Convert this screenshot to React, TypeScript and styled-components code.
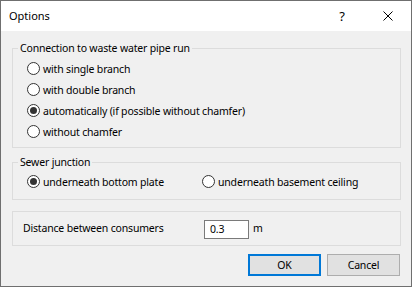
import React from 'react'
import styled, { createGlobalStyle } from 'styled-components'

const GlobalStyle = createGlobalStyle`
  html, body {
    margin: 0;
    padding: 0;
    background: #ffffff;
  }
  body {
    font-family: "Noto Sans", "Open Sans", sans-serif;
    font-size: 10.5px;
    letter-spacing: -0.18px;
    color: #000;
  }
`

const Window = styled.div`
  width: 412px;
  height: 287px;
  box-sizing: border-box;
  border: 1px solid #6f6f6f;
  display: flex;
  flex-direction: column;
  background: #f0f0f0;
`

const TitleBar = styled.div`
  height: 30px;
  background: #fff;
  display: flex;
  align-items: center;
`

const Title = styled.div`
  flex: 1;
  padding-left: 8px;
  font-size: 11px;
  letter-spacing: 0;
  line-height: 16px;
`

const CaptionButton = styled.div`
  width: 46px;
  height: 30px;
  display: flex;
  align-items: center;
  justify-content: center;
  font-size: 13px;
`

const Body = styled.div`
  flex: 1;
  padding: 9px 10px 10px 11px;
  display: flex;
  flex-direction: column;
`

const Group = styled.fieldset<{ $gap?: number }>`
  margin: ${({ $gap }) => $gap || 0}px 0 0 0;
  padding: 0;
  border: 1px solid #dcdcdc;
  min-width: 0;
`

const Legend = styled.legend`
  margin-left: 5px;
  padding: 0 2px;
  line-height: 16px;
`

const GroupContent = styled.div<{ $pt: number; $pb: number }>`
  padding: ${({ $pt }) => $pt}px 0 ${({ $pb }) => $pb}px 14px;
  display: flex;
  flex-direction: column;
`

const RadioRow = styled.div`
  display: flex;
  height: 21px;
  align-items: center;
`

const Option = styled.label<{ $width?: number }>`
  display: flex;
  align-items: center;
  gap: 3px;
  width: ${({ $width }) => ($width ? `${$width}px` : 'auto')};
  line-height: 16px;
  white-space: nowrap;
`

const RadioCircle = styled.span<{ $checked?: boolean }>`
  width: 13px;
  height: 13px;
  box-sizing: border-box;
  border: 1px solid #333;
  border-radius: 50%;
  background: #fff;
  display: flex;
  align-items: center;
  justify-content: center;
  flex: none;

  &::after {
    content: '';
    width: 7px;
    height: 7px;
    border-radius: 50%;
    background: #333;
    display: ${({ $checked }) => ($checked ? 'block' : 'none')};
  }
`

const Panel = styled.div`
  margin-top: 11px;
  border: 1px solid #dcdcdc;
  height: 35px;
  box-sizing: border-box;
  display: flex;
  align-items: center;
  padding: 1px 0 0 10px;
`

const FieldLabel = styled.span`
  width: 181px;
  line-height: 16px;
  padding-bottom: 3px;
`

const NumberBox = styled.div`
  width: 45px;
  height: 19px;
  box-sizing: border-box;
  border: 1px solid #7a7a7a;
  background: #fff;
  padding-left: 5px;
  line-height: 17px;
`

const Unit = styled.span`
  margin-left: 4px;
  line-height: 16px;
  padding-bottom: 3px;
`

const ButtonRow = styled.div`
  margin-top: 8px;
  display: flex;
  justify-content: flex-end;
  gap: 6px;
  padding-right: 1px;
`

const Button = styled.button<{ $default?: boolean }>`
  width: 73px;
  height: 22px;
  box-sizing: border-box;
  margin: 0;
  padding: 0;
  font-family: inherit;
  font-size: 10.5px;
  letter-spacing: inherit;
  color: #000;
  background: #e1e1e1;
  border: ${({ $default }) => ($default ? '2px solid #0078d7' : '1px solid #adadad')};
`

export default function App() {
  return (
    <>
      <GlobalStyle />
      <Window>
        <TitleBar>
          <Title>Options</Title>
          <CaptionButton>?</CaptionButton>
          <CaptionButton>
            <svg width="10" height="10" viewBox="0 0 10 10">
              <path d="M0.5 0.5 L9.5 9.5 M9.5 0.5 L0.5 9.5" stroke="#000" strokeWidth="1" fill="none" />
            </svg>
          </CaptionButton>
        </TitleBar>
        <Body>
          <Group>
            <Legend>Connection to waste water pipe run</Legend>
            <GroupContent $pt={2} $pb={5}>
              <RadioRow>
                <Option><RadioCircle />with single branch</Option>
              </RadioRow>
              <RadioRow>
                <Option><RadioCircle />with double branch</Option>
              </RadioRow>
              <RadioRow>
                <Option><RadioCircle $checked />automatically (if possible without chamfer)</Option>
              </RadioRow>
              <RadioRow>
                <Option><RadioCircle />without chamfer</Option>
              </RadioRow>
            </GroupContent>
          </Group>
          <Group $gap={6}>
            <Legend>Sewer junction</Legend>
            <GroupContent $pt={1} $pb={7}>
              <RadioRow>
                <Option $width={175}><RadioCircle $checked />underneath bottom plate</Option>
                <Option><RadioCircle />underneath basement ceiling</Option>
              </RadioRow>
            </GroupContent>
          </Group>
          <Panel>
            <FieldLabel>Distance between consumers</FieldLabel>
            <NumberBox>0.3</NumberBox>
            <Unit>m</Unit>
          </Panel>
          <ButtonRow>
            <Button $default>OK</Button>
            <Button>Cancel</Button>
          </ButtonRow>
        </Body>
      </Window>
    </>
  )
}
